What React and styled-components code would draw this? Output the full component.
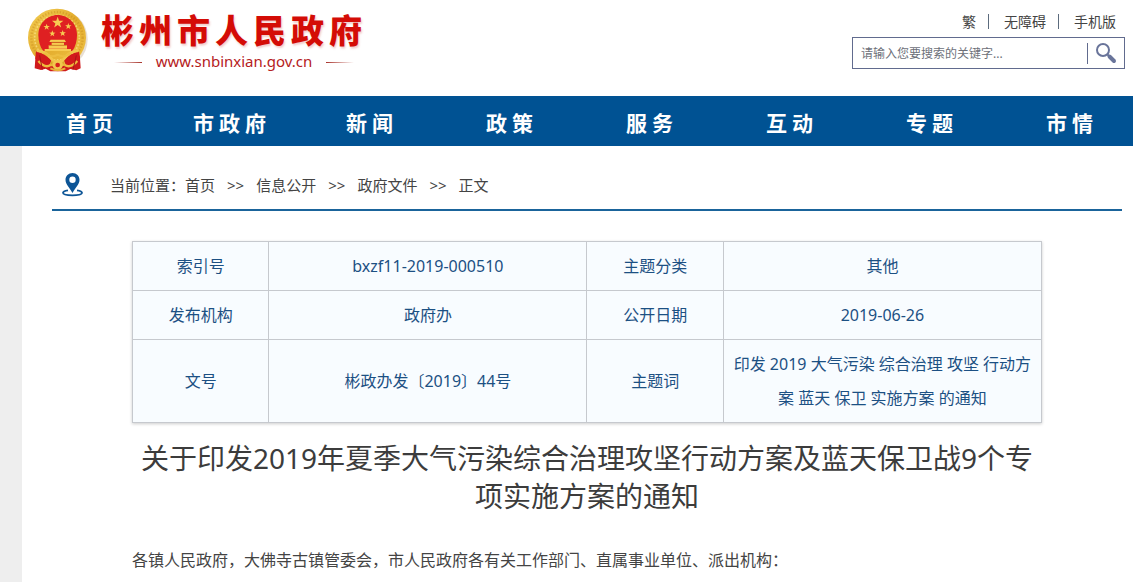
import React from "react";
import styled, { createGlobalStyle } from "styled-components";

const GlobalStyle = createGlobalStyle`
  * { box-sizing: border-box; }
  body {
    margin: 0;
    background: #eee;
    color: #444;
    font-family: "Noto Sans", "Noto Sans CJK SC", sans-serif;
    overflow-x: hidden;
  }
  a { color: inherit; text-decoration: none; }
`;

const Header = styled.header`
  display: flex;
  justify-content: space-between;
  height: 96px;
  padding: 8px 8px 0 27px;
  background: #fff;
`;

const Brand = styled.a`
  display: flex;
  gap: 12px;
`;

const BrandText = styled.span`
  display: flex;
  flex-direction: column;
  gap: 2px;
`;

const SiteName = styled.span`
  color: #d40c06;
  font: 900 33px/42px "Noto Sans CJK SC", sans-serif;
  letter-spacing: 5px;
  text-shadow: 1px 2px 2px rgba(200, 60, 50, 0.25);
  white-space: nowrap;
`;

const SiteUrl = styled.span`
  display: flex;
  align-items: center;
  justify-content: center;
  gap: 14px;
  color: #b5201c;
  font-size: 15px;
  line-height: 18px;
`;

const Rule = styled.i`
  width: 28px;
  height: 1px;
  margin-top: 2px;
  background: linear-gradient(${(p) => (p.$flip ? "270deg" : "90deg")}, transparent, #a8332b);
`;

const Tools = styled.div`
  display: flex;
  flex-direction: column;
  align-items: flex-end;
  gap: 5px;
`;

const QuickLinks = styled.nav`
  display: flex;
  align-items: center;
  height: 24px;
  padding: 3px 9px 0 0;
  font-size: 14px;
  line-height: 20px;

  a + a {
    display: flex;
    align-items: center;
  }
  a + a::before {
    content: "";
    width: 1px;
    height: 15px;
    margin: 0 15px 0 12px;
    background: #5c6b7d;
  }
`;

const Search = styled.form`
  display: flex;
  align-items: center;
  width: 273px;
  height: 32px;
  border: 1px solid #616b8e;
`;

const SearchInput = styled.input`
  flex: 1;
  min-width: 0;
  height: 21px;
  padding: 0 8px;
  border: 0;
  border-right: 1px solid #616b8e;
  outline: 0;
  background: none;
  color: #555;
  font: 12px/20px "Noto Sans", "Noto Sans CJK SC", sans-serif;

  &::placeholder { color: #6d7079; opacity: 1; }
`;

const SearchButton = styled.button`
  display: flex;
  align-items: center;
  justify-content: center;
  width: 36px;
  height: 30px;
  padding: 0;
  border: 0;
  background: none;
`;

const MainNav = styled.nav`
  display: flex;
  height: 50px;
  padding-left: 22px;
  overflow: hidden;
  background: #005293;
`;

const NavLink = styled.a`
  flex: 1 0 140px;
  color: #fff;
  font: 700 21px/52px "Noto Sans CJK SC", sans-serif;
  letter-spacing: 5px;
  text-align: center;
`;

const Page = styled.main`
  min-height: calc(100vh - 146px);
  margin-left: 22px;
  padding: 0 11px 0 30px;
  background: #fff;
`;

const Breadcrumb = styled.nav`
  display: flex;
  align-items: center;
  height: 65px;
  padding: 14px 0 0 9px;
  border-bottom: 2px solid #1a649b;
  font-size: 15px;
  line-height: 20px;
`;

const Place = styled.span`
  margin-left: 26px;
`;

const Arrow = styled.span`
  margin: 0 12px;
`;

const Article = styled.article`
  padding: 30px 80px 20px;
`;

const InfoTable = styled.table`
  width: 100%;
  table-layout: fixed;
  border-collapse: collapse;
  background: #f8fcff;
  box-shadow: 0 1px 3px rgba(0, 0, 0, 0.2);
  color: #1c5083;
  font-size: 16px;
  line-height: 34px;
  text-align: center;
`;

const Label = styled.th`
  width: 15%;
  padding: 7px 5px;
  border: 1px solid #c6c9ce;
  font-weight: 400;
`;

const Value = styled.td`
  width: 35%;
  padding: 7px 5px;
  border: 1px solid #c6c9ce;
`;

const Title = styled.h1`
  margin: 16px 0 0;
  color: #3c3c3c;
  font-size: 28px;
  font-weight: 400;
  line-height: 38px;
  text-align: center;
`;

const Paragraph = styled.p`
  margin: 29px 0 0;
  font-size: 16px;
  line-height: 32px;
`;

const star = (cx, cy, r) =>
  Array.from({ length: 10 }, (_, i) => {
    const a = -Math.PI / 2 + (i * Math.PI) / 5;
    const d = i % 2 ? r * 0.4 : r;
    return `${(cx + d * Math.cos(a)).toFixed(1)},${(cy + d * Math.sin(a)).toFixed(1)}`;
  }).join(" ");

function Emblem() {
  return (
    <svg width="62" height="66" viewBox="80 22 186 198" aria-hidden="true">
      <defs>
        <linearGradient id="gold" x1="0" y1="0" x2="1" y2="1">
          <stop offset="0" stopColor="#f3cf55" />
          <stop offset="0.5" stopColor="#e3ac2d" />
          <stop offset="1" stopColor="#f0c346" />
        </linearGradient>
      </defs>
      <ellipse cx="175" cy="116" rx="87" ry="89" fill="#d8c9b8" opacity="0.6" />
      <path d="M106 160 L103 203 L122 208 L136 204 L150 212 L196 212 L210 205 L228 209 L241 203 L238 158Z" fill="#cf1a1c" />
      <circle cx="170" cy="111" r="87" fill="url(#gold)" />
      <circle cx="170" cy="111" r="77" fill="none" stroke="#c98e1f" strokeWidth="7" strokeDasharray="4 5" opacity="0.5" />
      <circle cx="170" cy="111" r="67" fill="none" stroke="#fbe48a" strokeWidth="5" strokeDasharray="5 5" opacity="0.7" />
      <path d="M172 43C205 43 230 70 230 103C230 122 225 139 216 151H129C119 139 114 122 114 103C114 70 139 43 172 43Z" fill="#df2022" />
      <g fill="#f7cb52">
        <polygon points={star(172, 66, 18)} />
        <polygon points={star(139, 79, 10)} />
        <polygon points={star(204, 77, 10)} />
        <polygon points={star(156, 99, 10)} />
        <polygon points={star(187, 98, 10)} />
        <path d="M151 117H193L197 124H147ZM154 126H191V133H154ZM145 134H200V144H145ZM133 145H212V151H133Z" />
      </g>
      <path d="M153 125H192M146 134H199" stroke="#bd7a18" strokeWidth="2" />
      <path d="M107 151Q135 160 153 179L143 203L105 174ZM236 151Q207 160 191 179L200 203L239 173Z" fill="#d21a1c" />
      <path d="M109 150Q138 151 157 178Q172 188 188 178Q207 151 235 150" fill="none" stroke="#f1c54c" strokeWidth="8" />
      <path d="M133 157Q154 174 172 162Q191 174 210 157" fill="none" stroke="#edbd40" strokeWidth="6" />
      <path d="M114 181Q134 204 151 193M231 181Q211 204 193 193" fill="none" stroke="#eebc3e" strokeWidth="7" />
      <circle cx="172" cy="193" r="11" fill="#d6201c" stroke="#f2c64d" strokeWidth="8" />
      <path d="M150 203Q172 214 195 203" fill="none" stroke="#e7b13a" strokeWidth="6" />
      <path d="M118 164L126 207M228 164L218 207" stroke="#a91516" strokeWidth="3" />
    </svg>
  );
}

function Magnifier() {
  return (
    <svg width="22" height="22" viewBox="0 0 22 22" fill="none" stroke="#69749a" aria-hidden="true">
      <circle cx="8" cy="8" r="6" strokeWidth="2" />
      <path d="M12 12L15 15" strokeWidth="2" />
      <path d="M14.500 14.500L19 19" strokeWidth="4" strokeLinecap="round" />
    </svg>
  );
}

function Pin() {
  return (
    <svg width="23" height="25" viewBox="0 0 23 25" aria-hidden="true">
      <path d="M7 18.300C3.800 18.800 2 19.700 2 20.800C2 22.300 6 23.300 11.500 23.300S21 22.300 21 20.800C21 19.700 19 18.800 16 18.300" fill="none" stroke="#0d5596" strokeWidth="1.800" />
      <path fillRule="evenodd" d="M11.500 1C7.400 1 4.500 4 4.500 7.800C4.500 12.500 8.500 15.500 11.500 21C14.500 15.500 18.500 12.500 18.500 7.800C18.500 4 15.600 1 11.500 1ZM11.500 4.600A3.200 3.200 0 1 1 11.500 11A3.200 3.200 0 1 1 11.500 4.600Z" fill="#0d5596" />
    </svg>
  );
}

const navItems = ["首页", "市政府", "新闻", "政策", "服务", "互动", "专题", "市情"];
const crumbs = ["首页", "信息公开", "政府文件"];
const rows = [
  ["索引号", "bxzf11-2019-000510", "主题分类", "其他"],
  ["发布机构", "政府办", "公开日期", "2019-06-26"],
  ["文号", "彬政办发〔2019〕44号", "主题词", "印发 2019 大气污染 综合治理 攻坚 行动方案 蓝天 保卫 实施方案 的通知"],
];

export default function App() {
  return (
    <>
      <GlobalStyle />
      <Header>
        <Brand href="#">
          <Emblem />
          <BrandText>
            <SiteName>彬州市人民政府</SiteName>
            <SiteUrl>
              <Rule />
              www.snbinxian.gov.cn
              <Rule $flip />
            </SiteUrl>
          </BrandText>
        </Brand>
        <Tools>
          <QuickLinks>
            <a href="#">繁</a>
            <a href="#">无障碍</a>
            <a href="#">手机版</a>
          </QuickLinks>
          <Search onSubmit={(e) => e.preventDefault()}>
            <SearchInput aria-label="搜索" placeholder="请输入您要搜索的关键字..." />
            <SearchButton aria-label="搜索">
              <Magnifier />
            </SearchButton>
          </Search>
        </Tools>
      </Header>
      <MainNav>
        {navItems.map((item) => (
          <NavLink href="#" key={item}>{item}</NavLink>
        ))}
      </MainNav>
      <Page>
        <Breadcrumb>
          <Pin />
          <Place>当前位置：</Place>
          {crumbs.map((crumb) => (
            <React.Fragment key={crumb}>
              <a href="#">{crumb}</a>
              <Arrow>&gt;&gt;</Arrow>
            </React.Fragment>
          ))}
          <span>正文</span>
        </Breadcrumb>
        <Article>
          <InfoTable>
            <tbody>
              {rows.map(([labelA, valueA, labelB, valueB]) => (
                <tr key={labelA}>
                  <Label scope="row">{labelA}</Label>
                  <Value>{valueA}</Value>
                  <Label scope="row">{labelB}</Label>
                  <Value>{valueB}</Value>
                </tr>
              ))}
            </tbody>
          </InfoTable>
          <Title>关于印发2019年夏季大气污染综合治理攻坚行动方案及蓝天保卫战9个专项实施方案的通知</Title>
          <Paragraph>各镇人民政府，大佛寺古镇管委会，市人民政府各有关工作部门、直属事业单位、派出机构：</Paragraph>
        </Article>
      </Page>
    </>
  );
}
